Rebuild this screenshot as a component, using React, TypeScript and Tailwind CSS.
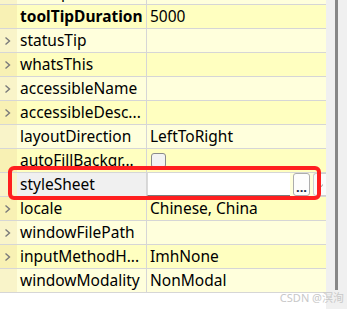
import React from "react";

type RowProps = {
  name: string;
  value?: React.ReactNode;
  bold?: boolean;
  chevron?: boolean;
  tone: "sat" | "light";
  selected?: boolean;
};

const tones = {
  sat: { branch: "bg-[#f8f1b4]", cell: "bg-[#ffffc0]" },
  light: { branch: "bg-[#f9f4c9]", cell: "bg-[#ffffdc]" },
};

function Chevron() {
  return (
    <svg width="7" height="10" viewBox="0 0 7 10" fill="none">
      <path d="M1.5 1.5L5.5 5L1.5 8.5" stroke="#7a7a7a" strokeWidth="1.4" />
    </svg>
  );
}

function Row({ name, value, bold, chevron, tone, selected }: RowProps) {
  const t = tones[tone];
  return (
    <div className="flex h-[24px] shrink-0 border-b border-[#d6d6d6]">
      <div className={`flex w-[17px] items-center pl-[4px] ${t.branch}`}>
        {chevron && <Chevron />}
      </div>
      <div
        className={`flex w-[130px] items-center border-r border-[#d6d6d6] pl-[3px] ${
          selected ? "bg-[#f0f0f0]" : t.cell
        } ${bold ? "font-bold" : ""}`}
      >
        {name}
      </div>
      <div className={`flex flex-1 items-center pl-[3px] ${t.cell}`}>{value}</div>
    </div>
  );
}

function StyleSheetEditor() {
  return (
    <div className="-ml-[3px] flex h-full items-stretch gap-[3px]">
      <div className="w-[143px] border-b border-l border-[#7a7a7a] border-l-[#dadada] bg-white" />
      <div className="flex w-[17px] items-end justify-center rounded-[3px] border border-[#adadad] bg-[#fdfdfd] pb-[3px] text-[13px] leading-[10px] font-bold text-[#1c2a4a]">
        ...
      </div>
      <div className="flex w-[13px] items-center justify-center rounded-l-[3px] border border-r-0 border-[#d0d0d0] bg-[#fbfbfb]">
        <svg width="7" height="7" viewBox="0 0 7 7" fill="none">
          <path d="M5.5 3.5A2.2 2.2 0 1 1 3.5 1.3" stroke="#a0a0a0" strokeWidth="1" />
        </svg>
      </div>
    </div>
  );
}

export default function App() {
  return (
    <div
      className="relative flex h-[309px] w-[347px] overflow-hidden bg-white text-[15.5px] leading-[23px] text-black"
      style={{ fontFamily: '"Noto Sans", "Noto Sans CJK SC", sans-serif' }}
    >
      <div className="-mt-[19px] flex w-[326px] flex-col">
        <Row name="toolTip" tone="light" chevron />
        <Row name="toolTipDuration" value="5000" bold tone="sat" />
        <Row name="statusTip" tone="light" chevron />
        <Row name="whatsThis" tone="sat" chevron />
        <Row name="accessibleName" tone="light" chevron />
        <Row name="accessibleDesc..." tone="sat" chevron />
        <Row name="layoutDirection" value="LeftToRight" tone="light" />
        <div className="flex h-[24px] shrink-0 border-b border-[#d6d6d6]">
          <div className="w-[17px] bg-[#f8f1b4]" />
          <div className="flex w-[130px] items-center border-r border-[#d6d6d6] bg-[#ffffc0] pl-[3px]">
            autoFillBackgr...
          </div>
          <div className="flex flex-1 items-start bg-[#ffffc0] pt-[4px] pl-[4px]">
            <div className="h-[15px] w-[15px] rounded-[3px] border border-[#8a8a8a] bg-[#f3f3f3]" />
          </div>
        </div>
        <Row name="styleSheet" value={<StyleSheetEditor />} tone="light" selected />
        <Row name="locale" value="Chinese, China" tone="sat" chevron />
        <Row name="windowFilePath" tone="light" chevron />
        <Row name="inputMethodH..." value="ImhNone" tone="sat" chevron />
        <Row name="windowModality" value="NonModal" tone="light" />
      </div>
      <div className="flex w-[21px] bg-[#f0f0f0] pl-[9px]">
        <div className="h-[290px] w-[3px] bg-[#878787]" />
      </div>

      <div className="absolute top-[166px] left-[8px] h-[34px] w-[313px] rounded-[6px] border-[4px] border-[#ff1f1f]" />
      <div className="absolute right-[3px] bottom-[5px] text-[11px] leading-[13px] text-[#c8c8c8]">
        CSDN @溟洵
      </div>
    </div>
  );
}
